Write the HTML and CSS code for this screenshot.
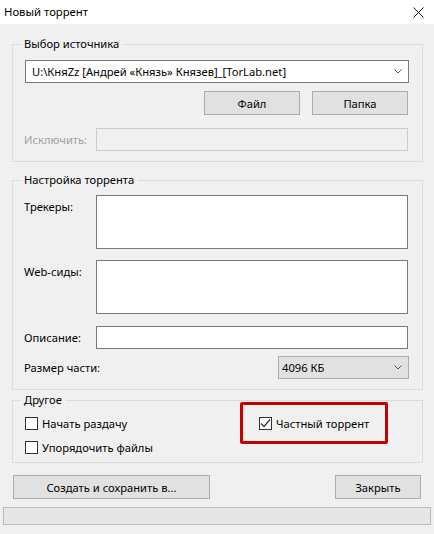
FILE: index.html
```html
<!DOCTYPE html>
<html lang="ru">
<head>
    <meta charset="UTF-8">
    <title>Новый торрент</title>
    <link rel="stylesheet" href="styles.css">
</head>
<body>
    <div class="titlebar">
        <span class="title">Новый торрент</span>
        <svg class="close" width="11" height="11" viewBox="0 0 11 11">
            <path d="M0.5 0.5 L10.5 10.5 M10.5 0.5 L0.5 10.5" stroke="#111" stroke-width="1" fill="none"/>
        </svg>
    </div>

    <div class="dialog">
        <fieldset class="group group-source">
            <legend>Выбор источника</legend>
            <div class="combo combo-path">
                <span class="combo-text">U:\КняZz [Андрей «Князь» Князев]_[TorLab.net]</span>
                <svg class="chevron" width="8" height="5" viewBox="0 0 8 5">
                    <path d="M0.5 0.5 L4 4 L7.5 0.5" stroke="#555" stroke-width="1" fill="none"/>
                </svg>
            </div>
            <div class="btn-row">
                <button type="button" class="btn btn-pick">Файл</button>
                <button type="button" class="btn btn-pick">Папка</button>
            </div>
            <div class="field-row row-exclude">
                <label class="label disabled" for="exclude">Исключить:</label>
                <input class="text-input" id="exclude" type="text" disabled>
            </div>
        </fieldset>

        <fieldset class="group group-settings">
            <legend>Настройка торрента</legend>
            <div class="field-row row-trackers">
                <label class="label" for="trackers">Трекеры:</label>
                <textarea class="text-area" id="trackers"></textarea>
            </div>
            <div class="field-row row-seeds">
                <label class="label" for="seeds">Web-сиды:</label>
                <textarea class="text-area" id="seeds"></textarea>
            </div>
            <div class="field-row row-comment">
                <label class="label" for="comment">Описание:</label>
                <input class="text-input" id="comment" type="text">
            </div>
            <div class="size-row">
                <span class="label">Размер части:</span>
                <div class="combo combo-size">
                    <span class="combo-text">4096 КБ</span>
                    <svg class="chevron" width="8" height="5" viewBox="0 0 8 5">
                        <path d="M0.5 0.5 L4 4 L7.5 0.5" stroke="#555" stroke-width="1" fill="none"/>
                    </svg>
                </div>
            </div>
        </fieldset>

        <fieldset class="group group-other">
            <legend>Другое</legend>
            <div class="check-grid">
                <label class="check"><span class="box"></span>Начать раздачу</label>
                <label class="check check-private">
                    <span class="box">
                        <svg width="11" height="11" viewBox="0 0 11 11">
                            <path d="M1 5.5 L4 8.5 L10 1.5" stroke="#333" stroke-width="1.2" fill="none"/>
                        </svg>
                    </span>Частный торрент
                    <span class="highlight"></span>
                </label>
                <label class="check"><span class="box"></span>Упорядочить файлы</label>
            </div>
        </fieldset>

        <div class="actions">
            <button type="button" class="btn btn-create">Создать и сохранить в...</button>
            <button type="button" class="btn btn-close">Закрыть</button>
        </div>

        <div class="progress"></div>
    </div>
</body>
</html>
```

FILE: styles.css
```css
body {
    margin: 0;
    width: 434px;
    height: 534px;
    background-color: #f0f0f0;
    font-family: "Noto Sans", Arial, sans-serif;
    font-size: 11.2px;
    color: #000;
    overflow: hidden;
}

.titlebar {
    height: 24px;
    background-color: #fff;
    display: flex;
    align-items: center;
    justify-content: space-between;
    padding: 0 10px 0 4px;
}

.title {
    font-size: 11.3px;
    line-height: 24px;
}

.close {
    margin-top: 1px;
}

.dialog {
    display: flex;
    flex-direction: column;
}

.group {
    margin: 0 11px 0 12px;
    padding: 0 13px 10px 12px;
    border: 1px solid #dcdcdc;
    min-width: 0;
}

.group legend {
    margin-left: -5px;
    padding: 0 4px;
    line-height: 16px;
}

.group-source {
    margin-top: 12px;
    padding-top: 8px;
}

.group-settings {
    margin-top: 10px;
    padding-top: 7px;
}

.group-other {
    margin-top: 2px;
    padding-top: 3px;
    padding-bottom: 3px;
}

/* combo boxes */
.combo {
    display: flex;
    align-items: center;
    justify-content: space-between;
    box-sizing: border-box;
    height: 23px;
    padding: 0 6px 0 6px;
}

.combo-path {
    background-color: #fff;
    border: 1px solid #7a7a7a;
    height: 23px;
}

.combo-size {
    width: 131px;
    background-color: #e1e1e1;
    border: 1px solid #adadad;
    padding-left: 3px;
}

.combo-text {
    white-space: nowrap;
    overflow: hidden;
}

.chevron {
    flex: none;
}

/* buttons */
.btn {
    font-family: inherit;
    font-size: inherit;
    color: #000;
    background-color: #e1e1e1;
    border: 1px solid #adadad;
    height: 24px;
    padding: 0;
    box-sizing: border-box;
}

.btn-row {
    display: flex;
    justify-content: flex-end;
    gap: 12px;
    margin-top: 8px;
    padding-right: 1px;
}

.btn-pick {
    width: 96px;
}

/* label + field rows */
.field-row {
    display: grid;
    grid-template-columns: 71px 1fr;
    align-items: start;
}

.label {
    line-height: 23px;
    margin-left: -1px;
    white-space: nowrap;
}

.disabled {
    color: #a0a0a0;
}

.text-input,
.text-area {
    box-sizing: border-box;
    width: 312px;
    margin: 0;
    font-family: inherit;
    font-size: inherit;
    background-color: #fff;
    border: 1px solid #7a7a7a;
    border-radius: 0;
    resize: none;
    outline: none;
}

.text-input {
    height: 23px;
}

.text-area {
    height: 54px;
}

.text-input:disabled {
    background-color: #f0f0f0;
    border-color: #cccccc;
}

.row-exclude {
    margin-top: 13px;
}

.row-seeds {
    margin-top: 11px;
}

.row-comment {
    margin-top: 12px;
}

.size-row {
    display: flex;
    justify-content: space-between;
    align-items: center;
    margin-top: 7px;
}

/* checkboxes */
.check-grid {
    display: grid;
    grid-template-columns: 234px 1fr;
}

.check {
    display: flex;
    align-items: center;
    height: 24px;
    gap: 4px;
    white-space: nowrap;
}

.box {
    width: 13px;
    height: 13px;
    box-sizing: border-box;
    border: 1px solid #333;
    background-color: #fff;
    display: flex;
    align-items: center;
    justify-content: center;
    flex: none;
}

.check-private {
    position: relative;
}

.highlight {
    position: absolute;
    left: -19px;
    top: -9px;
    width: 148px;
    height: 42px;
    box-sizing: border-box;
    border: 3px solid #c40000;
    border-radius: 2px;
}

/* bottom */
.actions {
    display: flex;
    justify-content: space-between;
    margin: 12px 13px 0 13px;
}

.btn-create {
    width: 197px;
}

.btn-close {
    width: 86px;
}

.progress {
    margin: 8px 3px 0 3px;
    height: 18px;
    box-sizing: border-box;
    background-color: #e6e6e6;
    border: 1px solid #bcbcbc;
}
```
